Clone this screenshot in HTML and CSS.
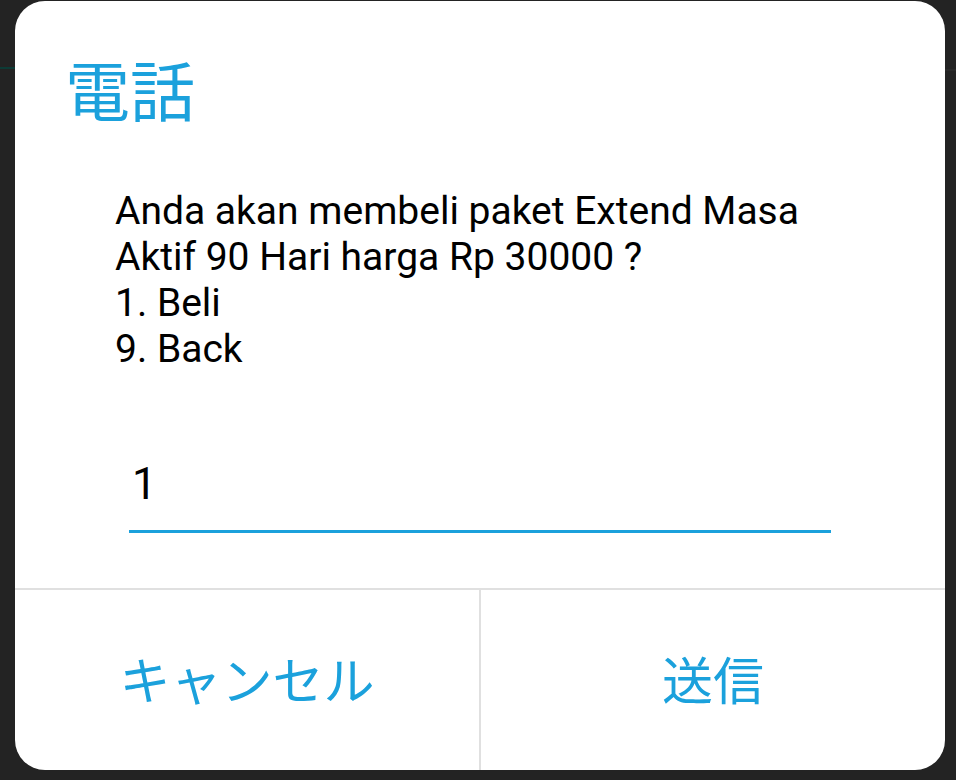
FILE: index.html
```html
<!DOCTYPE html>
<html lang="ja">
<head>
<meta charset="utf-8">
<title>電話</title>
<link rel="stylesheet" href="styles.css">
</head>
<body>
<div class="backdrop">
  <div class="bar bar-left"></div>
  <div class="bar bar-right"></div>
</div>
<div class="dialog">
  <div class="title">電話</div>
  <div class="message">Anda akan membeli paket Extend Masa<br>Aktif 90 Hari harga Rp 30000 ?<br>1. Beli<br>9. Back</div>
  <div class="field">1</div>
  <div class="actions">
    <div class="action">キャンセル</div>
    <div class="action action-right">送信</div>
  </div>
</div>
</body>
</html>
```
FILE: styles.css
```css
html, body {
  margin: 0;
  padding: 0;
}
body {
  width: 956px;
  height: 780px;
  background: #232323;
  overflow: hidden;
  position: relative;
  font-family: Roboto, "Noto Sans CJK JP", sans-serif;
}
.backdrop {
  position: absolute;
  inset: 0;
}
.bar {
  position: absolute;
  height: 2px;
  background: #0d3b36;
}
.bar-left {
  left: 0;
  top: 67px;
  width: 15px;
}
.bar-right {
  right: 0;
  top: 69px;
  width: 12px;
  background: #2a2a2a;
}
.dialog {
  position: relative;
  margin: 1px 11px 0 15px;
  width: 930px;
  height: 769px;
  background: #ffffff;
  border-radius: 30px;
  display: flex;
  flex-direction: column;
  overflow: hidden;
}
.title {
  margin-top: 55px;
  padding-left: 50px;
  font-family: "Noto Sans CJK JP", sans-serif;
  font-size: 65px;
  line-height: 65px;
  color: #1ba1dc;
}
.message {
  margin-top: 67px;
  padding-left: 100px;
  font-size: 39px;
  line-height: 46px;
  color: #000000;
}
.field {
  margin: 86px 0 0 114px;
  width: 702px;
  padding: 0 0 20px 3px;
  box-sizing: border-box;
  font-size: 44px;
  line-height: 52px;
  color: #000000;
  border-bottom: 3px solid #1ba1dc;
}
.actions {
  margin-top: 55px;
  flex: 1;
  display: flex;
  border-top: 2px solid #e0e0e0;
}
.action {
  flex: 1;
  display: flex;
  align-items: center;
  justify-content: center;
  font-family: "Noto Sans CJK JP", sans-serif;
  font-size: 51px;
  color: #1ba1dc;
  padding-bottom: 4px;
}
.action-right {
  border-left: 2px solid #e0e0e0;
}
```
